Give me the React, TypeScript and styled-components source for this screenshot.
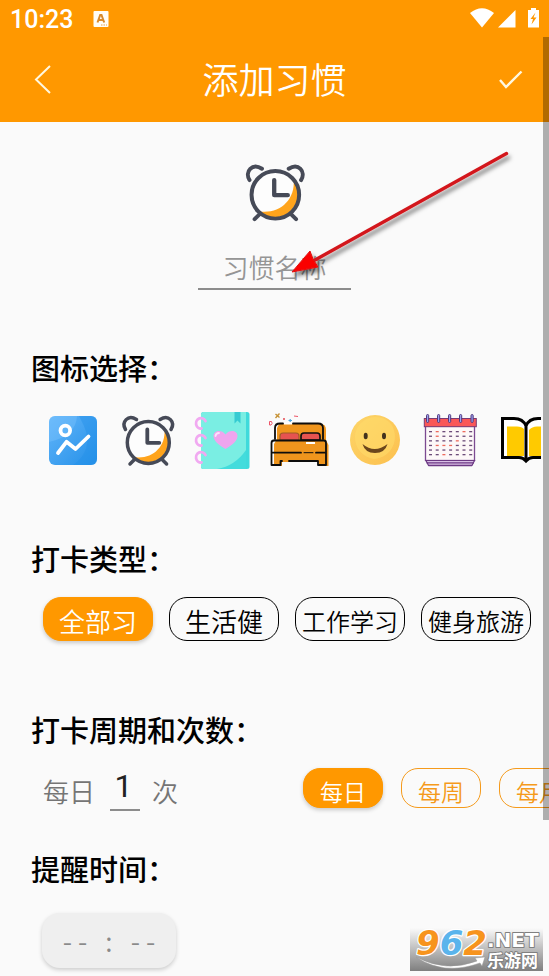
import React, { useState } from "react";
import styled, { createGlobalStyle, css } from "styled-components";

const ORANGE = "#ff9800";
const INK = "#464a57";

const GlobalStyle = createGlobalStyle`
  *, *::before, *::after { box-sizing: border-box; }
  html, body { margin: 0; padding: 0; background: #fafafa; }
  body, button, input {
    font-family: "Noto Sans CJK SC", "Noto Sans", sans-serif;
    font-weight: 350;
  }
  button, input { margin: 0; padding: 0; border: 0; background: none; color: inherit; border-radius: 0; }
  button { cursor: pointer; }
`;

const Page = styled.div`
  position: relative;
  min-height: 100vh;
  overflow: hidden;
  background: #fafafa;
  color: #000;
`;

const Header = styled.header`
  background: ${ORANGE};
  color: #fff;
`;

const StatusBar = styled.div`
  display: flex;
  align-items: center;
  height: 38px;
  padding: 0 8px 0 10px;
`;

const Clock = styled.time`
  font: 500 25px/30px Roboto, sans-serif;
  padding-top: 2px;
`;

const Notice = styled.svg`
  margin-left: 20px;
  margin-right: auto;
`;

const AppBar = styled.div`
  display: flex;
  align-items: center;
  justify-content: space-between;
  height: 84px;
  padding: 0 18px;
`;

const Title = styled.h1`
  margin: 0;
  padding-bottom: 4px;
  font-size: 36px;
  line-height: 44px;
  font-weight: 350;
`;

const BarButton = styled.button`
  display: flex;
  width: 40px;
  height: 40px;
`;

const Hero = styled.section`
  position: relative;
  display: flex;
  flex-direction: column;
  align-items: center;
  padding: 36px 0 57px;
`;

const NameInput = styled.input`
  width: 153px;
  height: 46px;
  margin-top: 18px;
  border-bottom: 2px solid #8c8c8c;
  font-size: 26px;
  text-align: center;
  outline: none;
  &::placeholder { color: #959595; opacity: 1; }
`;

const Arrow = styled.svg`
  position: absolute;
  left: 50%;
  top: 22px;
  margin-left: 12px;
  pointer-events: none;
`;

const Section = styled.section<{ $tight?: boolean }>`
  padding-bottom: ${(p) => (p.$tight ? 34 : 68)}px;
`;

const Heading = styled.h2`
  margin: 0 0 19px 31px;
  font-size: 29px;
  line-height: 40px;
  font-weight: 500;
`;

const IconRow = styled.div`
  display: flex;
  gap: 15px;
  margin: 23px 8px 0 0;
  padding-left: 43px;
  overflow: hidden;
`;

const IconButton = styled.button`
  display: flex;
  flex: 0 0 60px;
  height: 60px;
`;

const ChipRow = styled.div`
  display: flex;
  gap: 16px;
  padding-left: 43px;
`;

const filled = css`
  background: ${ORANGE};
  border-color: ${ORANGE};
  color: #fff;
  box-shadow: 0 2px 4px rgba(0, 0, 0, 0.2);
`;

const Chip = styled.button<{ $active?: boolean; $long?: boolean }>`
  flex: 0 0 110px;
  height: 44px;
  padding-top: 3px;
  border: 1px solid #000;
  border-radius: 18px;
  font-size: ${(p) => (p.$long ? 24 : 26)}px;
  line-height: 38px;
  white-space: nowrap;
  ${(p) => p.$active && filled}
`;

const PeriodRow = styled.div`
  display: flex;
  align-items: flex-start;
  padding-left: 43px;
`;

const CountLabel = styled.label`
  display: flex;
  flex: 0 0 260px;
  color: #757575;
  font-size: 26px;
  line-height: 46px;
`;

const CountInput = styled.input`
  width: 30px;
  height: 43px;
  margin: 0 12px 0 15px;
  padding: 0 3px 5px 0;
  border-bottom: 2px solid #8c8c8c;
  color: #222;
  font-family: Roboto, sans-serif;
  font-size: 32px;
  font-weight: 400;
  text-align: center;
  outline: none;
`;

const Periods = styled.div`
  display: flex;
  gap: 18px;
`;

const PeriodChip = styled.button<{ $active?: boolean }>`
  flex: 0 0 80px;
  height: 40px;
  padding-top: 6px;
  border: 1px solid #f59a1b;
  border-radius: 17px;
  color: #f59a1b;
  font-size: 23px;
  line-height: 32px;
  ${(p) => p.$active && filled}
`;

const TimeButton = styled.button`
  display: block;
  width: 134px;
  height: 55px;
  margin: 25px 0 7px 42px;
  border-radius: 18px;
  background: #efefef;
  box-shadow: 0 2px 4px rgba(0, 0, 0, 0.18);
  color: #8a8a8a;
  font-size: 27px;
  white-space: pre;
`;

const ScrollThumb = styled.div`
  position: absolute;
  top: 37px;
  right: 0;
  bottom: 16%;
  width: 6px;
  background: rgba(0, 0, 0, 0.3);
`;

const Watermark = styled.svg`
  position: absolute;
  right: 6px;
  bottom: 5px;
`;

const AlarmIcon = ({ size = 60 }: { size?: number }) => (
  <svg width={size} height={size} viewBox="0 0 60 60" fill="none" stroke={INK} strokeLinecap="round" strokeLinejoin="round">
    <circle cx="30.3" cy="32" r="21" fill="#fdfdfd" stroke="none" />
    <path d="M46.5 19A21 21 0 0 1 15.5 47C33 50 48 38 46.5 19Z" fill="#ffa41c" stroke="none" />
    <g strokeWidth="3.5">
      <circle cx="30.3" cy="32.5" r="21" />
      <path d="M7.5 19.5C3 12 10 4 18.5 9.5M53 19.5C57.6 12 50.6 4 42.1 9.5" />
      <path d="M16.5 49.5 12 54M44.1 49.5 48.6 54" />
      <path d="M29.3 19.5V32.8H41.3" strokeWidth="3.8" />
    </g>
  </svg>
);

const ChartIcon = () => (
  <svg width="60" height="60" viewBox="0 0 60 60">
    <defs>
      <linearGradient id="chartBlue" x1="0" y1="0" x2="1" y2="1">
        <stop offset="0" stopColor="#62b5fa" />
        <stop offset="1" stopColor="#2490e8" />
      </linearGradient>
    </defs>
    <rect x="6" y="6" width="48" height="49" rx="6" fill="url(#chartBlue)" />
    <path d="M36 6H48Q54 6 54 12V49Q54 55 48 55H30Q51 40 41 16Z" fill="#2391e9" opacity=".45" />
    <path d="M6 12Q6 6 12 6H34Q33 26 6 32Z" fill="#84c8ff" opacity=".35" />
    <g fill="none" stroke="#fff" strokeWidth="3.8" strokeLinecap="round" strokeLinejoin="round">
      <circle cx="22.3" cy="20.5" r="4.8" />
      <path d="M15 43 23.5 31.8 32.5 39 45.5 26.5" />
    </g>
  </svg>
);

const NotebookIcon = () => (
  <svg width="60" height="60" viewBox="0 0 60 60">
    <rect x="8" y="2" width="48.5" height="57" rx="2.5" fill="#3fdadb" />
    <path d="M10.5 2H53V50Q46 57 31 59H10.5Q8 59 8 56.5V4.5Q8 2 10.5 2Z" fill="#7aeee3" />
    <path d="M53 40V59H24Q42 56 53 40Z" fill="#43dcdc" />
    <path d="M41.5 2H47.5V13.5L44.5 10.5 41.5 13.5Z" fill="#35cbd2" />
    <path d="M32.5 39C26 35 20.5 31 20.5 26C20.5 20.5 28.5 19 32.5 24.5C36.5 19 44.5 20.5 44.5 26C44.5 31 39 35 32.5 39Z" fill="#efa5ee" />
    <path d="M22.5 26Q23 23 26 23" fill="none" stroke="#fbe3fb" strokeWidth="1.8" strokeLinecap="round" />
    <g fill="none" stroke="#f1a9f1" strokeWidth="2.8" strokeLinecap="round">
      {[13.5, 30.5, 47.5].map((y) => (
        <path key={y} d={`M12.5 ${y - 2.5}A5 5.2 0 1 0 8.5 ${y + 5}`} />
      ))}
    </g>
  </svg>
);

const BedIcon = () => (
  <svg width="60" height="60" viewBox="0 0 60 60" overflow="visible">
    <path d="M11 14H53Q58 14 58 20V30L60.5 35V56H51V52H14V56H6V34L9 29V18Z" fill="#ef951d" />
    <g fill="#e65350" stroke="#111" strokeWidth="1.2">
      <path d="M12 30V26Q12 23 15 23H28Q31 23 31 26V30Z" stroke="#9f5a28" />
      <path d="M33 30V26Q33 23 36 23H49Q52 23 52 26V30Z" strokeWidth="1.7" />
    </g>
    <g fill="none" stroke="#0d0d0d" strokeWidth="1.8" strokeLinecap="round" strokeLinejoin="round">
      <path d="M7 29V18Q7 13.5 12 13.5H15M25 13.5H50Q55 13.5 55 18V29" />
      <path d="M5 30.5H56Q58 30.5 58 33V55H50V51H21M14 51H12.5V55H3.5V33Q3.5 30.5 6 30.5" />
      <path d="M4 42.7H33M48 42.7H57" />
      <path d="M36 42.7H45" strokeWidth="1" />
    </g>
    <path d="M16 13.5H24M38 33H47" stroke="#fff" strokeWidth="2" />
    <path d="M7.5 4 11.5 7.5M11.5 3.5 7.5 8" stroke="#c69235" strokeWidth="1.4" />
    <path d="M1.5 11.5H3.5Q5 13.5 3 15H1.5ZM26 6 30 6.5" fill="none" stroke="#ed5568" strokeWidth="1" />
    <circle cx="16" cy="9" r="1" fill="#e34852" />
    <path d="M20.5 10.5H24M22.2 9V12" stroke="#4ca4db" strokeWidth="1.2" />
  </svg>
);

const SmileIcon = () => (
  <svg width="60" height="60" viewBox="0 0 60 60">
    <defs>
      <linearGradient id="smileGold" x1="0" y1="0" x2="1" y2="1">
        <stop offset="0" stopColor="#fdd568" />
        <stop offset="1" stopColor="#fcc04f" />
      </linearGradient>
    </defs>
    <circle cx="32" cy="30" r="25" fill="url(#smileGold)" />
    <path d="M12 27A20.5 20.5 0 0 1 48 14C58 29 48 48 31 49C20 47 12 39 12 27Z" fill="#ffdc6c" opacity=".55" />
    <ellipse cx="22.7" cy="26" rx="2" ry="3.2" fill="#43321d" />
    <ellipse cx="41" cy="26" rx="2" ry="3.2" fill="#43321d" />
    <path d="M19.5 34Q31.5 44 44.5 34Q42 43 32 43Q22 43 19.5 34Z" fill="#6b461c" />
  </svg>
);

const CalendarIcon = () => (
  <svg width="60" height="60" viewBox="0 0 60 60">
    <rect x="7.5" y="16" width="49" height="34.5" fill="#fdf8f8" stroke="#7c4a91" strokeWidth="1.3" />
    <path d="M8 50.5H56.5L54 55.5H10.5Z" fill="#d8bfe5" stroke="#6c3984" strokeWidth="1.2" />
    <path d="M8.5 52.8H56M10.5 55.5H54" stroke="#6c3984" strokeWidth="1.3" />
    <rect x="6.3" y="8.5" width="52" height="8.2" fill="#fa5757" stroke="#793b73" strokeWidth="1" />
    {[9.5, 20.5, 31.5, 42.5, 54].map((x) => (
      <rect key={x} x={x - 1} y="4.5" width="2.2" height="8" rx="1.1" fill="#9ca1ee" stroke="#51397e" strokeWidth="1" />
    ))}
    {[0, 1, 2, 3, 4, 5].map((r) =>
      [0, 1, 2, 3, 4, 5, 6].map((c) => (
        <rect
          key={`${r}-${c}`}
          x={11 + c * 6.7}
          y={21 + r * 4.6}
          width="3"
          height="1.3"
          fill={["0-5", "1-1", "2-4", "3-1", "3-2", "3-3", "5-2", "0-1"].includes(`${r}-${c}`) ? "#ee6a5c" : "#6c4b79"}
        />
      ))
    )}
  </svg>
);

const BookIcon = () => (
  <svg width="60" height="60" viewBox="0 0 60 60">
    <path d="M9.5 8.5H21Q30 8.5 33 16Q36 8.5 45 8.5H57V47.5H40Q36 47.5 33 51Q30 47.5 26 47.5H9.5Z" fill="#fff" />
    <path d="M14 16.5H24Q29 16.5 31 19V46H14ZM36 20Q39 16.5 44 16.5H53V46H36Z" fill="#ffca00" />
    <path d="M9.5 8.5H21Q30 8.5 33 16Q36 8.5 45 8.5H57V47.5H40Q36 47.5 33 51Q30 47.5 26 47.5H9.5ZM33 15V51" fill="none" stroke="#000" strokeWidth="3" />
  </svg>
);

const icons = [
  { name: "图表", Icon: ChartIcon },
  { name: "闹钟", Icon: AlarmIcon },
  { name: "笔记本", Icon: NotebookIcon },
  { name: "床", Icon: BedIcon },
  { name: "笑脸", Icon: SmileIcon },
  { name: "日历", Icon: CalendarIcon },
  { name: "书", Icon: BookIcon },
];

const types = ["全部习", "生活健", "工作学习", "健身旅游"];
const periods = ["每日", "每周", "每月"];

export default function App() {
  const [type, setType] = useState(types[0]);
  const [period, setPeriod] = useState(periods[0]);

  return (
    <Page>
      <GlobalStyle />
      <Header>
        <StatusBar>
          <Clock>10:23</Clock>
          <Notice width="16" height="17" viewBox="0 0 16 17">
            <rect x="0.5" y="0" width="15" height="16" rx="1" fill="#fffdf5" />
            <path d="M4.5 11.5 7.2 4H8.5L11.2 11.5M5.5 9H10" fill="none" stroke="#d98a2b" strokeWidth="2" />
            <path d="M8 14H14" stroke="#e7a04a" strokeWidth="1" strokeDasharray="1.5 1" />
          </Notice>
          <svg width="71" height="22" viewBox="0 0 71 22" fill="#fff">
            <path d="M0 5Q12 -4.5 24 5L12 19.5Z" />
            <path d="M28 19.5 45.5 2V19.5Z" />
            <path d="M58 2H61V0H66V2H69V19.5H58Z" />
            <path d="M65.5 4.5 60.5 11H63L61.5 16.5 66.5 9.5H63.5Z" fill={ORANGE} />
          </svg>
        </StatusBar>
        <AppBar>
          <BarButton aria-label="返回">
            <svg width="40" height="40" viewBox="0 0 40 40" fill="none" stroke="#fff8e0" strokeWidth="2">
              <path d="M32 6 18 19.5 32 33" />
            </svg>
          </BarButton>
          <Title>添加习惯</Title>
          <BarButton aria-label="保存">
            <svg width="40" height="40" viewBox="0 0 40 40" fill="none" stroke="#fff8e0" strokeWidth="2.4">
              <path d="M9 20 15 27 30.5 11.5" />
            </svg>
          </BarButton>
        </AppBar>
      </Header>

      <main>
        <Hero>
          <AlarmIcon size={68} />
          <NameInput aria-label="习惯名称" placeholder="习惯名称" />
          <Arrow width="232" height="138" viewBox="0 0 232 138" aria-hidden="true">
            <defs>
              <filter id="arrowShadow" x="-10%" y="-10%" width="120%" height="130%">
                <feDropShadow dx="2" dy="4" stdDeviation="2" floodColor="#000" floodOpacity="0.5" />
              </filter>
            </defs>
            <g filter="url(#arrowShadow)" transform="translate(0 1)">
              <path d="M28 115 219.5 8.5" stroke="#d3191c" strokeWidth="3.4" strokeLinecap="round" />
              <path d="M5 127 23 106 26 114 31 122Z" fill="#fa0505" stroke="#e01212" strokeWidth="1" />
            </g>
          </Arrow>
        </Hero>

        <Section>
          <Heading>图标选择：</Heading>
          <IconRow>
            {icons.map(({ name, Icon }) => (
              <IconButton key={name} aria-label={name}>
                <Icon />
              </IconButton>
            ))}
          </IconRow>
        </Section>

        <Section>
          <Heading>打卡类型：</Heading>
          <ChipRow>
            {types.map((t) => (
              <Chip key={t} $active={t === type} $long={t.length > 3} onClick={() => setType(t)}>
                {t}
              </Chip>
            ))}
          </ChipRow>
        </Section>

        <Section $tight>
          <Heading>打卡周期和次数：</Heading>
          <PeriodRow>
            <CountLabel>
              每日
              <CountInput defaultValue="1" inputMode="numeric" />
              次
            </CountLabel>
            <Periods>
              {periods.map((p) => (
                <PeriodChip key={p} $active={p === period} onClick={() => setPeriod(p)}>
                  {p}
                </PeriodChip>
              ))}
            </Periods>
          </PeriodRow>
        </Section>

        <section>
          <Heading>提醒时间：</Heading>
          <TimeButton aria-label="选择提醒时间">{"- -   :   - -"}</TimeButton>
        </section>
      </main>

      <ScrollThumb />
      <Watermark width="133" height="43" viewBox="0 0 133 43" overflow="visible" role="img" aria-label="962.NET 乐游网">
        <defs>
          <linearGradient id="markShade" x1="0" y1="0" x2="0" y2="1">
            <stop offset="0" stopColor="#fafafa" />
            <stop offset="1" stopColor="#7f7f7f" />
          </linearGradient>
        </defs>
        <rect width="133" height="43" fill="url(#markShade)" />
        <path d="M6 29Q36 45 67 33L65 30 75 29 72 38 70 35Q34 48 6 29Z" fill="#fff" stroke="#999" strokeWidth=".5" />
        <g fontFamily="DejaVu Sans, Verdana, sans-serif" fontWeight="700" paintOrder="stroke" strokeLinejoin="round">
          <text x="6" y="27" fontSize="34" fontStyle="italic" stroke="#fff" strokeWidth="2.5">
            <tspan fill="#f7941d">9</tspan>
            <tspan fill="#5ab4ec">6</tspan>
            <tspan fill="#f7941d">2</tspan>
          </text>
          <g fill="#fff" stroke="#808080" strokeWidth="2">
            <text x="77" y="19" fontSize="20">.NET</text>
            <text x="77" y="39" fontSize="17" fontFamily="Noto Sans CJK SC, sans-serif">乐游网</text>
          </g>
        </g>
      </Watermark>
    </Page>
  );
}
